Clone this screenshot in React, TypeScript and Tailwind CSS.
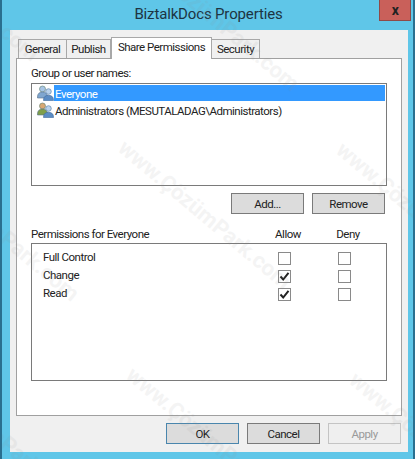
const font = { fontFamily: 'Roboto, "Noto Sans", sans-serif' }

function UsersIcon({ tint }: { tint: 'blue' | 'green' }) {
  const back = tint === 'blue' ? '#7fa6cf' : '#7f9f4a'
  const head = tint === 'blue' ? '#a9c6e6' : '#d9a873'
  return (
    <svg width="17" height="16" viewBox="0 0 17 16" className="shrink-0">
      <circle cx="5.5" cy="4" r="3" fill={head} stroke="#5f7f6f" strokeWidth="0.6" />
      <path d="M0.5 12c0-3.5 2-5 5-5s5 1.5 5 5v1h-10z" fill={back} stroke="#587089" strokeWidth="0.6" />
      <circle cx="11.5" cy="6.5" r="2.8" fill="#b9d2ec" stroke="#4f77a3" strokeWidth="0.6" />
      <path d="M6.5 15c0-3.2 2-4.7 5-4.7s5 1.5 5 4.7v0.5h-10z" fill="#5b8cc4" stroke="#3f6a9c" strokeWidth="0.6" />
    </svg>
  )
}

function Checkbox({ checked }: { checked?: boolean }) {
  return (
    <div className="w-[13px] h-[13px] border border-[#8a8a8a] bg-white flex items-center justify-center">
      {checked && (
        <svg width="11" height="11" viewBox="0 0 11 11">
          <path d="M1.5 5.5L4.2 8.5L9.5 1.8" fill="none" stroke="#222" strokeWidth="2" />
        </svg>
      )}
    </div>
  )
}

function Button({ label, variant }: { label: string; variant?: 'default' | 'disabled' }) {
  const look =
    variant === 'default'
      ? 'border-[#4a86ad] bg-[#dcdcdc] text-[#222]'
      : variant === 'disabled'
        ? 'border-[#c4c4c4] bg-[#efefef] text-[#9a9a9a]'
        : 'border-[#7a7a7a] bg-[#dcdcdc] text-[#222]'
  return (
    <div className={`w-[73px] h-[21px] border flex items-center justify-center pt-[2px] ${look}`}>
      {label}
    </div>
  )
}

const rows = [
  { name: 'Full Control', allow: false },
  { name: 'Change', allow: true },
  { name: 'Read', allow: true },
]

// watermark spots, running off the edges like the stamped original
const marks = [
  [-158, -30], [102, 0], [94, 198], [-118, 210], [312, 200], [102, 425], [325, 430], [-118, 415],
]

export default function App() {
  return (
    <div
      className="relative w-[415px] h-[459px] overflow-hidden bg-[#5fc6e8] border-l-2 border-r-2 border-[#2a6f8f] flex flex-col text-[11.5px] tracking-[-0.5px] whitespace-nowrap text-[#222]"
      style={font}
    >
      <div className="relative h-[30px] shrink-0 flex items-center justify-center">
        <span className="text-[15px] tracking-[-0.15px] text-[#1d3442] mt-[-2px] pl-[2px]">BiztalkDocs Properties</span>
        <div className="absolute right-[2px] top-0 w-[32px] h-[21px] bg-[#c9605a] border border-[#8f4a47] border-t-0 flex items-center justify-center text-[14px] font-bold text-[#222]">
          x
        </div>
      </div>

      <div className="ml-[8px] mr-[5px] h-[422px] bg-[#f0f0f0] px-[6px] flex flex-col">
        <div className="flex items-end h-[28px] pl-[2px] shrink-0">
          <div className="h-[19px] w-[49px] border border-b-0 border-[#a8a8a8] flex items-center justify-center pt-[2px]">General</div>
          <div className="h-[19px] w-[44px] border border-b-0 border-l-0 border-[#a8a8a8] flex items-center justify-center pt-[2px]">Publish</div>
          <div className="relative z-10 h-[22px] w-[101px] mb-[-1px] border border-b-0 border-[#a8a8a8] bg-white flex items-center justify-center pb-[1px]">Share Permissions</div>
          <div className="h-[19px] w-[48px] border border-b-0 border-l-0 border-[#a8a8a8] flex items-center justify-center pt-[2px]">Security</div>
        </div>

        <div className="h-[358px] border border-[#a0a0a0] bg-white px-[14px] flex flex-col shrink-0">
          <div className="h-[24px] pt-[6px] shrink-0">Group or user names:</div>
          <div className="h-[103px] border border-[#7a7a7a] p-[1px] flex flex-col shrink-0">
            <div className="h-[16px] flex items-center pl-[4px]">
              <UsersIcon tint="blue" />
              <span className="h-[16px] flex-1 bg-[#3399ff] text-white flex items-center pl-[1px] pt-[3px]">Everyone</span>
            </div>
            <div className="h-[16px] mt-[1px] flex items-center pl-[4px]">
              <UsersIcon tint="green" />
              <span className="pl-[1px] pt-[3px]">Administrators (MESUTALADAG\Administrators)</span>
            </div>
          </div>

          <div className="mt-[7px] flex justify-end gap-[8px] pr-[2px] shrink-0">
            <Button label="Add..." />
            <Button label="Remove" />
          </div>

          <div className="h-[30px] mt-[-1px] flex items-end shrink-0">
            <span className="w-[227px]">Permissions for Everyone</span>
            <span className="w-[60px] text-center">Allow</span>
            <span className="w-[60px] text-center">Deny</span>
          </div>

          <div className="h-[138px] border border-[#7a7a7a] pt-[5px] flex flex-col shrink-0">
            {rows.map((r) => (
              <div key={r.name} className="h-[18px] flex items-center">
                <span className="w-[246px] pl-[11px]">{r.name}</span>
                <div className="w-[13px] mr-[47px]"><Checkbox checked={r.allow} /></div>
                <Checkbox />
              </div>
            ))}
          </div>
        </div>

        <div className="mt-[7px] flex justify-end gap-[8px] shrink-0 mr-[1px]">
          <Button label="OK" variant="default" />
          <Button label="Cancel" />
          <Button label="Apply" variant="disabled" />
        </div>
      </div>

      {marks.map(([x, y]) => (
        <div
          key={`${x}-${y}`}
          className="absolute text-[22px] tracking-normal font-bold text-[#8a8a8a] opacity-[0.09] rotate-[40deg] pointer-events-none"
          style={{ left: x, top: y }}
        >
          www.ÇözümPark.com
        </div>
      ))}
    </div>
  )
}
